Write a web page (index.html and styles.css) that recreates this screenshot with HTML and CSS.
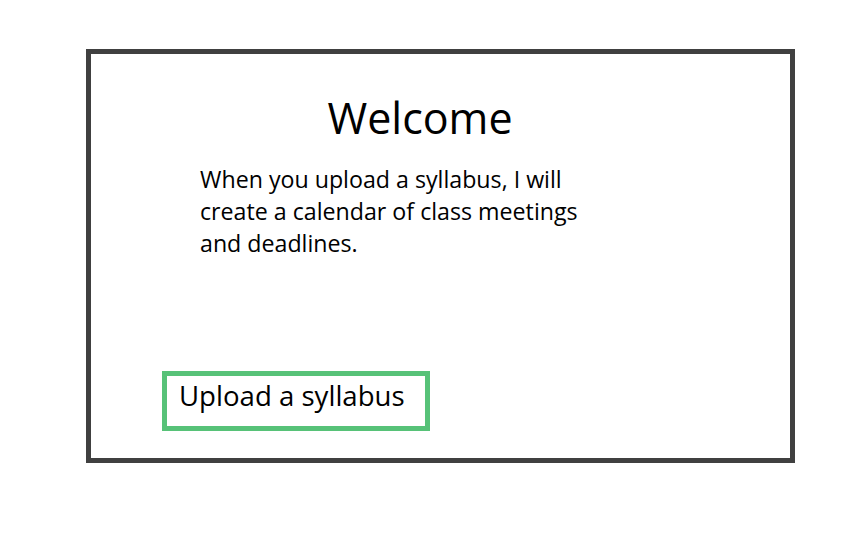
FILE: index.html
```html
<!DOCTYPE html>
<html>
<head>
<meta charset="utf-8">
<link rel="stylesheet" href="styles.css">
</head>
<body>
<main class="card">
  <section class="intro">
    <h1 class="title">Welcome</h1>
    <p class="lead">When you upload a syllabus, I will<br>create a calendar of class meetings<br>and deadlines.</p>
  </section>
  <button class="upload" type="button">Upload a syllabus</button>
</main>
</body>
</html>
```
FILE: styles.css
```css
html, body {
  margin: 0;
  padding: 0;
  background: #ffffff;
}
body {
  font-family: "Open Sans", "Noto Sans", sans-serif;
  color: #000;
  padding: 49px 0 0 86px;
}
.card {
  box-sizing: border-box;
  width: 709px;
  height: 414px;
  border: 5px solid #404040;
  display: flex;
  flex-direction: column;
  padding: 0 0 0 71px;
}
.intro {
  width: 516px;
  display: flex;
  flex-direction: column;
}
.title {
  margin: 40px 0 0 0;
  font-weight: 400;
  font-size: 43px;
  line-height: 48px;
  text-align: center;
}
.lead {
  margin: 21px 0 0 38px;
  font-size: 23.2px;
  line-height: 32px;
}
.upload {
  align-self: flex-start;
  margin-top: 112px;
  box-sizing: border-box;
  width: 268px;
  height: 60px;
  border: 5px solid #57c278;
  background: #fff;
  font-family: inherit;
  font-size: 27.6px;
  color: #000;
  text-align: left;
  padding: 0 0 12px 12px;
}
```
